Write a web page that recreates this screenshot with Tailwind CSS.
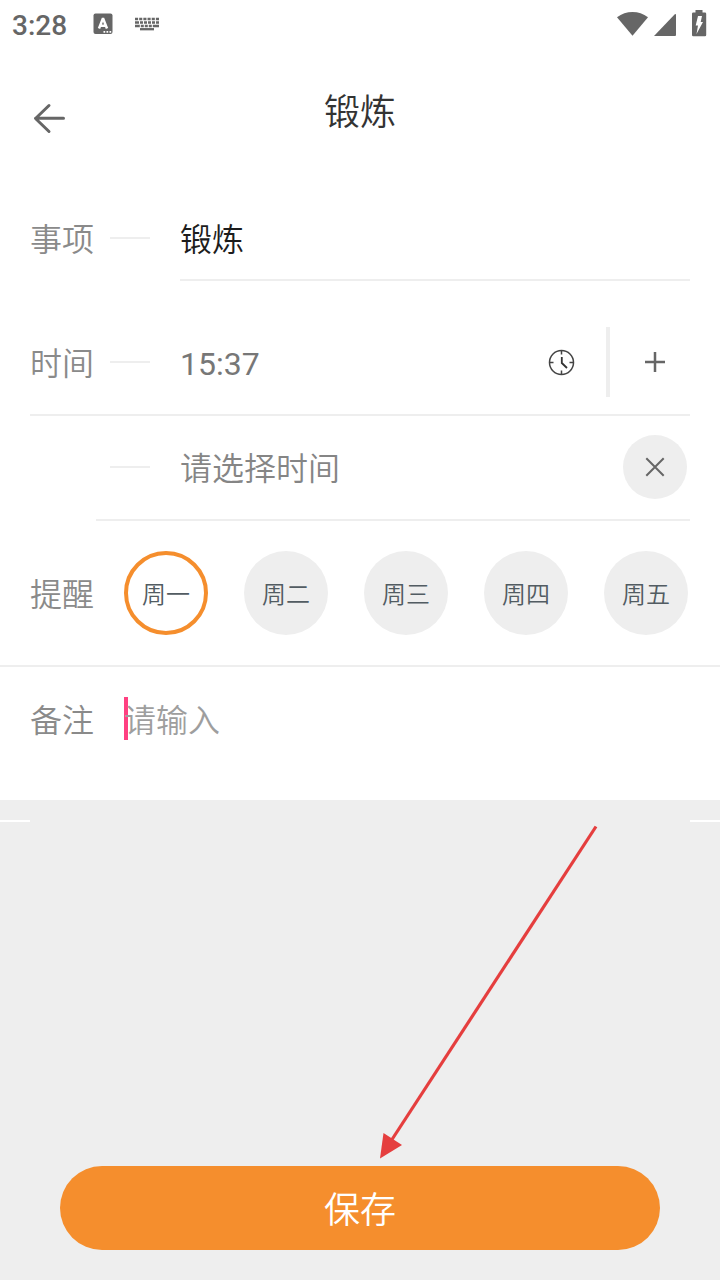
<!DOCTYPE html>
<html lang="zh-CN">
<head>
<meta charset="utf-8">
<title>锻炼</title>
<script src="https://cdn.jsdelivr.net/npm/@tailwindcss/browser@4"></script>
</head>
<body class="bg-white">
<div class="relative flex h-[1280px] w-[720px] flex-col overflow-hidden bg-white font-['Roboto','Noto_Sans_CJK_SC',sans-serif] text-[32px] leading-[48px] font-[350] text-[#8a8a8a]">
  <!-- Status bar -->
  <div class="flex h-12 shrink-0 items-center pl-3 text-[#666]">
    <span class="w-[81px] pt-[3px] text-[28px] leading-[48px] font-[480]">3:28</span>
    <svg class="h-12 w-20" viewBox="93 0 80 48" fill="#666">
      <rect x="93.5" y="13.5" width="19" height="20.5" rx="2"/>
      <path d="M99 28.500L102.700 19H103.300L107 28.500M100.300 25.700H105.700" fill="none" stroke="#fff" stroke-width="2.500"/>
      <path d="M103.500 31h1.700v1.700h-1.700zM106.500 31h1.700v1.700h-1.700zM109.500 31h1.700v1.700h-1.700z" fill="#fff"/>
      <path d="M135 19H159" stroke="#666" stroke-width="2.300" stroke-dasharray="3.100 1.080"/>
      <path d="M135 22.500H159" stroke="#666" stroke-width="2.300" stroke-dasharray="4 1 3 1 3 1 3 1 3 1 4"/>
      <path d="M135 26H159" stroke="#666" stroke-width="2.300" stroke-dasharray="4.800 1 3 1 3 1 3 1 7"/>
      <path d="M140 29.200H154" stroke="#666" stroke-width="2.300"/>
    </svg>
    <svg class="ml-auto h-12 w-[104px]" viewBox="616 0 104 48" fill="#666">
      <path d="M617 17.300Q624 12 632.500 12T648 17.300L632.500 35.700Z"/>
      <path d="M654 36L674.800 14.200Q676 13.300 676 15V35Q676 36 675 36Z"/>
      <path d="M695.500 10H702.500V12.500H705Q706.200 12.500 706.200 13.700V35Q706.200 36.200 705 36.200H693.200Q692 36.200 692 35V13.700Q692 12.500 693.200 12.500H695.500Z"/>
      <path d="M698 16H702L700.700 22H703L696.500 34L698 25.500H695.700Z" fill="#fff"/>
    </svg>
  </div>
  <!-- Title bar -->
  <header class="grid h-[149px] shrink-0 grid-cols-[60px_1fr_60px] px-[30px] text-[#333]">
    <svg class="mt-[54px] h-8 w-9" viewBox="30 102 36 32" fill="none" stroke="#666" stroke-width="3" stroke-linecap="round" stroke-linejoin="round"><path d="M49 105.500L35.500 118.500L49 131.500M35.500 118.300H63.500"/></svg>
    <h1 class="mt-[38px] text-center text-[36px] leading-[54px]">锻炼</h1>
  </header>
  <!-- Item -->
  <div class="flex h-[82px] shrink-0 items-center pl-[30px]">
    <span class="w-20 pt-1">事项</span><i class="h-0.5 w-10 bg-[#eee]"></i><span class="ml-[30px] pt-1 text-[#1c1c1c]">锻炼</span>
  </div>
  <div class="mr-[30px] mb-[29px] ml-[180px] h-0.5 shrink-0 bg-[#eee]"></div>
  <!-- Time -->
  <div class="flex h-[104px] shrink-0 items-center pl-[30px]">
    <span class="w-20 pt-1">时间</span><i class="h-0.5 w-10 bg-[#eee]"></i><span class="ml-[30px] pt-1 font-normal text-[#777]">15:37</span>
    <svg class="ml-auto h-7 w-7" viewBox="0 0 28 28" fill="none" stroke="#444" stroke-width="1.500"><circle cx="14.500" cy="14.500" r="12"/><path d="M14.500 3V6.500M14.500 22.500V26M3 14.500H6.500M22.500 14.500H26"/><path d="M14.800 9V15L20 20" stroke-width="1.800" stroke="#333"/></svg>
    <i class="ml-[31px] h-[70px] w-1 bg-[#eee]"></i>
    <svg class="mr-[54px] ml-[34px] h-[22px] w-[22px]" viewBox="0 0 22 22" stroke="#666" stroke-width="2.500"><path d="M11 1V21M1 11H21"/></svg>
  </div>
  <div class="mx-[30px] h-0.5 shrink-0 bg-[#eee]"></div>
  <!-- Additional time -->
  <div class="mb-px flex h-[102px] shrink-0 items-center pr-[33px] pl-[110px]">
    <i class="h-0.5 w-10 bg-[#eee]"></i><span class="ml-[30px] pt-1 text-[#858585]">请选择时间</span>
    <span class="ml-auto flex size-16 items-center justify-center rounded-full bg-[#eee]">
      <svg class="size-5" viewBox="0 0 20 20" stroke="#666" stroke-width="2"><path d="M1.300 1.300L18.700 18.700M18.700 1.300L1.300 18.700"/></svg>
    </span>
  </div>
  <div class="mr-[30px] ml-24 h-0.5 shrink-0 bg-[#eee]"></div>
  <!-- Reminder days -->
  <div class="flex h-[144px] shrink-0 items-center pl-[30px]">
    <span class="w-[94px] shrink-0 pt-[3px]">提醒</span>
    <div class="flex gap-9 text-2xl text-[#525c62]">
      <span class="flex size-[84px] items-center justify-center rounded-full border-4 border-[#f58e2d] pt-[3px]">周一</span>
      <span class="flex size-[84px] items-center justify-center rounded-full bg-[#eee] pt-[3px]">周二</span>
      <span class="flex size-[84px] items-center justify-center rounded-full bg-[#eee] pt-[3px]">周三</span>
      <span class="flex size-[84px] items-center justify-center rounded-full bg-[#eee] pt-[3px]">周四</span>
      <span class="flex size-[84px] items-center justify-center rounded-full bg-[#eee] pt-[3px]">周五</span>
    </div>
  </div>
  <div class="h-0.5 shrink-0 bg-[#eee]"></div>
  <!-- Notes -->
  <div class="flex h-[103px] shrink-0 items-center pl-[30px]">
    <span class="w-[94px] pt-1">备注</span>
    <i class="-mr-1 h-[43px] w-1 bg-[#ff4081]"></i><span class="pt-1 text-[#9e9e9e]">请输入</span>
  </div>
  <!-- Save area -->
  <div class="mt-[30px] flex flex-1 flex-col bg-[#eee] pt-5">
    <div class="flex h-0.5 justify-between"><i class="w-[30px] bg-white"></i><i class="w-[30px] bg-white"></i></div>
    <button class="mx-[60px] mt-auto mb-[30px] h-[84px] rounded-full bg-[#f58e2d] pt-[5px] text-[36px] leading-[54px] text-white">保存</button>
  </div>
  <svg class="absolute top-[820px] left-[370px] h-[345px] w-[240px]" viewBox="370 820 240 345"><path d="M596 826.500L391 1141" stroke="#e53e3e" stroke-width="3.200"/><path d="M380 1158.500L383.500 1133L402 1145Z" fill="#e53e3e"/></svg>
</div>
</body>
</html>
